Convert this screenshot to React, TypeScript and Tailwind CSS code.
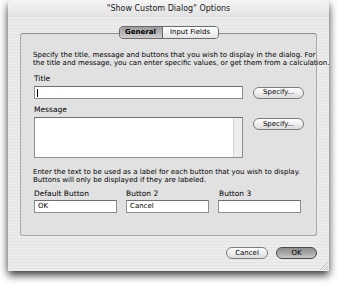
import React from "react";

const font = { fontFamily: '"DejaVu Sans", "Open Sans", sans-serif' };

function AquaButton({ label, w, def }: { label: string; w: string; def?: boolean }) {
  return (
    <div
      className={
        "h-[12px] rounded-full border flex items-center justify-center text-[7px] leading-none text-black " +
        w +
        (def
          ? " border-[#4a4a4a] bg-linear-to-b from-[#8e8e8e] via-[#a6a6a6] to-[#c9c9c9]"
          : " border-[#7c7c7c] bg-linear-to-b from-[#ffffff] via-[#eeeeee] to-[#dcdcdc]")
      }
    >
      {label}
    </div>
  );
}

function Field({ value, w }: { value?: string; w: string }) {
  return (
    <div
      className={
        "h-[13px] bg-white border border-[#8f8f8f] border-t-[#6f6f6f] flex items-center pl-[3px] text-[7px] leading-none text-black " +
        w
      }
    >
      {value}
    </div>
  );
}

export default function App() {
  return (
    <div className="w-[338px] h-[285px] bg-white overflow-hidden" style={font}>
      <div className="ml-[8px] w-[321px] h-[271px] rounded-t-[4px] bg-[#ececec] bg-[repeating-linear-gradient(0deg,#ececec_0px,#ececec_2px,#e4e4e4_2px,#e4e4e4_3px)] shadow-[0_4px_8px_rgba(0,0,0,0.8)] flex flex-col">
        <div className="h-[17px] rounded-t-[4px] bg-linear-to-b from-[#f4f4f4] to-[#e2e2e2] flex items-center justify-center text-[8px] text-[#1a1a1a] leading-none">
          "Show Custom Dialog" Options
        </div>
        <div className="px-[12px] flex flex-col">
          <div className="relative mt-[16px] h-[203px] rounded-[3px] border border-[#a9a9a9] border-t-[#8c8c8c] bg-[#e1e1e1] pl-[12px] pr-[12px] pt-[17px] flex flex-col">
            <div className="absolute left-1/2 -translate-x-1/2 top-[-8px] h-[13px] w-[100px] flex rounded-[4px] border border-[#6c6c6c] overflow-hidden text-[7px] leading-none">
              <div className="w-[43px] flex items-center justify-center bg-linear-to-b from-[#9c9c9c] via-[#b4b4b4] to-[#cfcfcf] border-r border-[#6c6c6c] font-bold text-black">
                General
              </div>
              <div className="flex-1 flex items-center justify-center bg-linear-to-b from-[#ffffff] to-[#e6e6e6] text-black">
                Input Fields
              </div>
            </div>
            <div className="text-[7px] leading-[8px] text-black whitespace-nowrap">
              Specify the title, message and buttons that you wish to display in the dialog. For
              <br />
              the title and message, you can enter specific values, or get them from a calculation.
            </div>
            <div className="mt-[8px] pl-[1px] text-[7.5px] leading-[8px] text-black">Title</div>
            <div className="mt-[3px] flex items-center gap-[10px] pl-[1px]">
              <div className="h-[13px] w-[210px] bg-white border border-[#8f8f8f] border-t-[#6f6f6f] flex items-center pl-[2px]">
                <div className="w-px h-[8px] bg-black" />
              </div>
              <AquaButton label="Specify..." w="w-[51px]" />
            </div>
            <div className="mt-[7px] pl-[1px] text-[7.5px] leading-[8px] text-black">Message</div>
            <div className="mt-[3px] flex items-start gap-[10px] pl-[1px]">
              <div className="h-[41px] w-[210px] bg-white border border-[#8f8f8f] border-t-[#6f6f6f] flex justify-end">
                <div className="w-[9px] h-full bg-[#eeeeee] border-l border-[#d4d4d4]" />
              </div>
              <div className="mt-[1px]">
                <AquaButton label="Specify..." w="w-[51px]" />
              </div>
            </div>
            <div className="mt-[10px] text-[7px] leading-[8px] text-black whitespace-nowrap">
              Enter the text to be used as a label for each button that you wish to display.
              <br />
              Buttons will only be displayed if they are labeled.
            </div>
            <div className="mt-[6px] pl-[1px] flex text-[7.5px] leading-[8px] text-black">
              <div className="w-[92px]">Default Button</div>
              <div className="w-[93px]">Button 2</div>
              <div>Button 3</div>
            </div>
            <div className="mt-[2px] pl-[1px] flex gap-[9px]">
              <Field value="OK" w="w-[83px]" />
              <Field value="Cancel" w="w-[83px]" />
              <Field w="w-[83px]" />
            </div>
          </div>
          <div className="mt-[11px] flex justify-end gap-[8px]">
            <AquaButton label="Cancel" w="w-[42px]" />
            <AquaButton label="OK" w="w-[41px]" def />
          </div>
        </div>
        <div className="mt-auto self-end mr-[1px] mb-[1px] w-[8px] h-[8px] bg-[linear-gradient(135deg,transparent_50%,#bdbdbd_50%,#bdbdbd_56%,transparent_56%,transparent_70%,#bdbdbd_70%,#bdbdbd_76%,transparent_76%,transparent_88%,#bdbdbd_88%)]" />
      </div>
    </div>
  );
}
